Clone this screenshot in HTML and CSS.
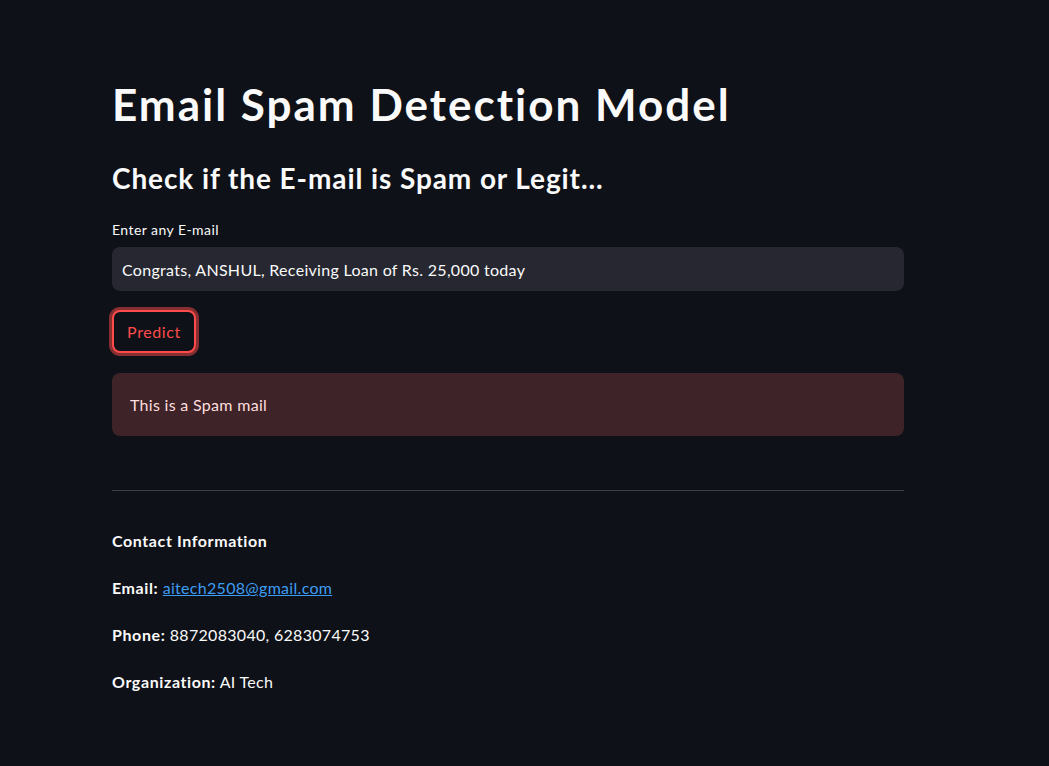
FILE: index.html
```html
<!DOCTYPE html>
<html lang="en">
<head>
<meta charset="utf-8">
<title>Email Spam Detection Model</title>
<link rel="stylesheet" href="styles.css">
</head>
<body>
<main class="main">
  <div class="block">
    <h1 class="title">Email Spam Detection Model</h1>
    <h3 class="subheader">Check if the E-mail is Spam or Legit...</h3>
    <div class="field">
      <label class="field-label">Enter any E-mail</label>
      <div class="input">Congrats, ANSHUL, Receiving Loan of Rs. 25,000 today</div>
    </div>
    <div class="btn-row"><button class="btn">Predict</button></div>
    <div class="alert">This is a Spam mail</div>
    <hr class="divider">
    <p class="md"><strong>Contact Information</strong></p>
    <p class="md"><strong>Email:</strong> <a href="#" class="link">aitech2508@gmail.com</a></p>
    <p class="md"><strong>Phone:</strong> 8872083040, 6283074753</p>
    <p class="md"><strong>Organization:</strong> AI Tech</p>
  </div>
</main>
</body>
</html>
```
FILE: styles.css
```css
* { box-sizing: border-box; }
html, body {
  margin: 0;
  padding: 0;
  background: #0e1117;
  color: #fafafa;
  font-family: "Lato", "Liberation Sans", sans-serif;
  font-size: 16px;
}
.main {
  width: 1049px;
  height: 766px;
  padding: 72px 0 0 112px;
}
.block {
  width: 792px;
  display: flex;
  flex-direction: column;
}
.title {
  margin: 0;
  font-size: 44px;
  font-weight: 700;
  line-height: 64px;
  letter-spacing: 2px;
}
.subheader {
  margin: 20px 0 0;
  font-size: 28px;
  font-weight: 700;
  line-height: 44px;
  letter-spacing: 0.9px;
}
.field {
  margin-top: 20px;
  display: flex;
  flex-direction: column;
}
.field-label {
  font-size: 14px;
  line-height: 20px;
  margin-bottom: 7px;
  letter-spacing: 0.45px;
}
.input {
  height: 44px;
  background: #262730;
  border-radius: 8px;
  padding: 0 10px;
  display: flex;
  align-items: center;
  font-size: 16px;
  letter-spacing: 0.3px;
}
.btn-row { margin-top: 19px; display: flex; }
.btn {
  height: 43px;
  width: 84px;
  padding: 0 10px;
  background: #0e1117;
  color: #ff4b4b;
  border: 2px solid #ff4b4b;
  border-radius: 8px;
  box-shadow: 0 0 0 3px rgba(255, 75, 75, 0.5);
  font-family: inherit;
  font-size: 16px;
  letter-spacing: 0.6px;
}
.alert {
  margin-top: 20px;
  height: 63px;
  background: #3e2428;
  color: #ffdede;
  border-radius: 8px;
  padding: 0 18px;
  display: flex;
  align-items: center;
  font-size: 16px;
  letter-spacing: 0.3px;
}
.divider {
  margin: 54px 0 0;
  border: none;
  border-top: 1px solid rgba(250, 250, 250, 0.2);
  height: 0;
  width: 792px;
}
.md {
  margin: 0;
  line-height: 26px;
  height: 47px;
  font-size: 16px;
  letter-spacing: 0.3px;
}
.md strong { letter-spacing: 0.6px; }
.md:first-of-type { margin-top: 37px; }
.link { color: #3d9df3; text-decoration: underline; }
```
